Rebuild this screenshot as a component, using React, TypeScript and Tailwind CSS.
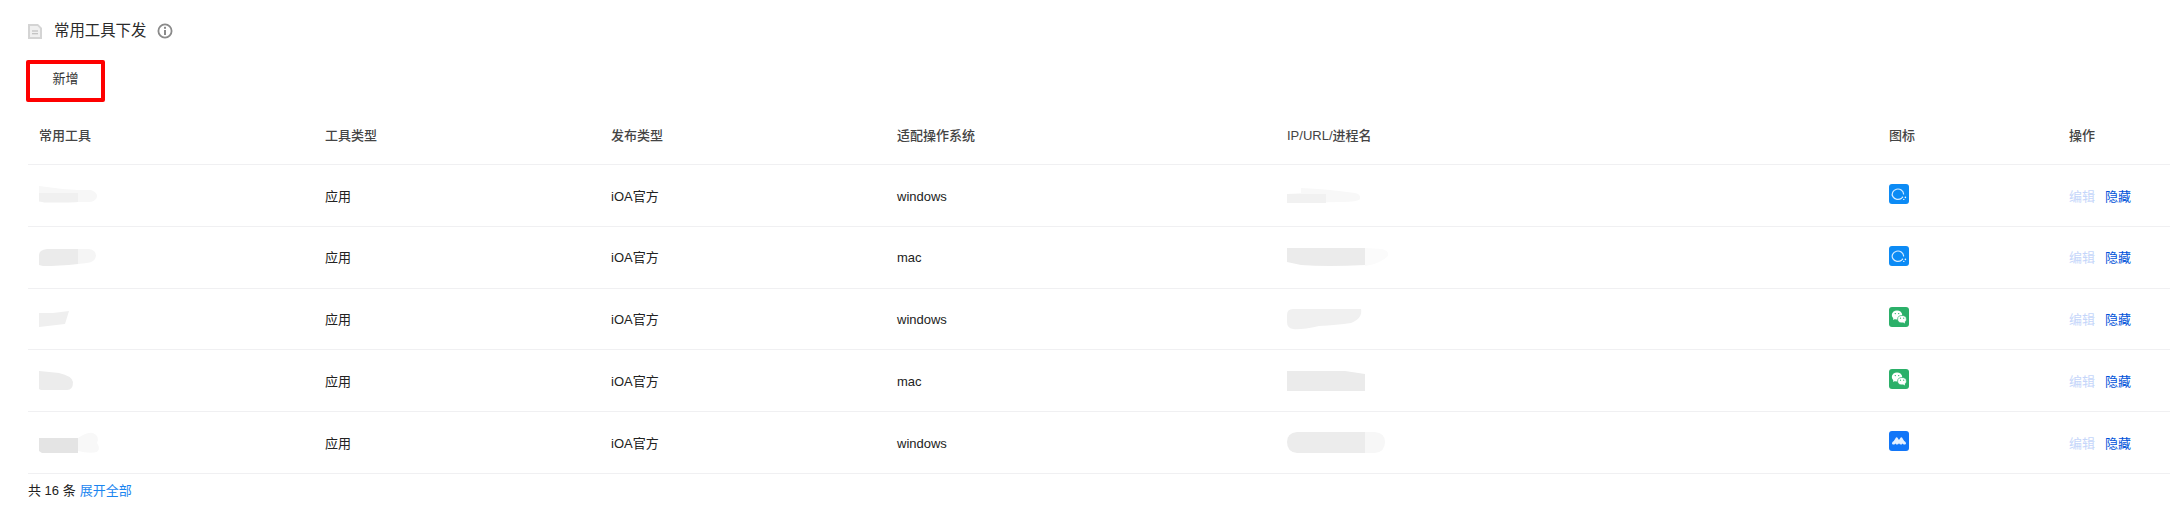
const FONT = "font-['Liberation_Sans','Noto_Sans_CJK_SC',sans-serif]";

type Row = {
  type: string;
  os: string;
  icon: "qq" | "wechat" | "meeting";
  name: React.ReactNode;
  target: React.ReactNode;
};

function Smudge({ w, h, children }: { w: number; h: number; children: React.ReactNode }) {
  return (
    <svg width={w} height={h} viewBox={`0 0 ${w} ${h}`} className="block">
      {children}
    </svg>
  );
}

function ChatIcon() {
  return (
    <svg width="20" height="20" viewBox="0 0 20 20" className="block">
      <rect width="20" height="20" rx="3" fill="#0c8bf5" />
      <path
        d="M12.6 14.2A5.7 5.2 0 1 1 14.6 10"
        fill="none"
        stroke="#d5ebff"
        strokeWidth="1.2"
        strokeLinecap="round"
      />
      <circle cx="13.4" cy="13.2" r="0.8" fill="#eef7ff" />
      <circle cx="16.4" cy="13.4" r="0.8" fill="#eef7ff" />
      <circle cx="14.8" cy="15.4" r="0.7" fill="#eef7ff" />
    </svg>
  );
}

function WechatIcon() {
  return (
    <svg width="20" height="20" viewBox="0 0 20 20" className="block">
      <rect width="20" height="20" rx="3" fill="#2bb069" />
      <ellipse cx="8" cy="8" rx="5.2" ry="4.6" fill="#fff" />
      <path d="M4.6 10.5l-.6 2.6 2.6-1.4z" fill="#fff" />
      <ellipse cx="13" cy="12.2" rx="4.4" ry="3.7" fill="#fff" stroke="#2bb069" strokeWidth="0.7" />
      <path d="M15.5 14.5l.6 2-2-1z" fill="#fff" />
      <circle cx="6.3" cy="6.6" r="0.7" fill="#2bb069" />
      <circle cx="9.7" cy="6.6" r="0.7" fill="#2bb069" />
      <circle cx="11.5" cy="11.2" r="0.6" fill="#2bb069" />
      <circle cx="14.7" cy="11.2" r="0.6" fill="#2bb069" />
    </svg>
  );
}

function MeetingIcon() {
  return (
    <svg width="20" height="20" viewBox="0 0 20 20" className="block">
      <rect width="20" height="20" rx="3" fill="#1276f8" />
      <path
        d="M3 12.5 Q3 10.5 4.8 10 L7 6.5 Q7.6 5.8 8.3 6.5 L10 9 L11.7 6.5 Q12.4 5.8 13 6.5 L15.2 10 Q17 10.5 17 12.5 Q17 13.6 15.8 13.6 Q14.4 13.6 13.6 12.4 Q12.8 13.6 11.8 13.6 Q10.7 13.6 10 12.3 Q9.3 13.6 8.2 13.6 Q7.2 13.6 6.4 12.4 Q5.6 13.6 4.2 13.6 Q3 13.6 3 12.5Z"
        fill="#e6f1ff"
      />
    </svg>
  );
}

const ICONS = { qq: <ChatIcon />, wechat: <WechatIcon />, meeting: <MeetingIcon /> };

const rows: Row[] = [
  {
    type: "iOA官方",
    os: "windows",
    icon: "qq",
    name: (
      <Smudge w={60} h={18}>
        <path d="M0 0 Q20 3 39 4 L52 4 Q59 7 58 11 Q56 16 50 16 L39 16 L0 16Z" fill="#f7f7f7" />
        <path d="M0 7 L39 7 L39 16 Q38 16.5 5 16.5 L0 15Z" fill="#f0f0f0" />
      </Smudge>
    ),
    target: (
      <Smudge w={75} h={16}>
        <path d="M14 1 Q40 2 68 6 Q74 7 73 12 Q71 15 55 15 L0 16 L0 7 L14 6Z" fill="#f8f8f8" />
        <path d="M0 7 L39 7 L39 16 L0 16Z" fill="#f1f1f1" />
      </Smudge>
    ),
  },
  {
    type: "iOA官方",
    os: "mac",
    icon: "qq",
    name: (
      <Smudge w={58} h={20}>
        <path d="M39 2 L50 2 Q57 3 57 9 Q56 15 48 16 L39 17Z" fill="#f5f5f5" />
        <path d="M8 2 L39 2 L39 17 Q20 19 4 19 L0 18 L0 8 Q0 3 8 2Z" fill="#ebebeb" />
      </Smudge>
    ),
    target: (
      <Smudge w={104} h={20}>
        <path d="M78 1 L95 2 Q104 5 100 10 Q92 17 78 19Z" fill="#fbfbfb" />
        <path d="M0 1 L78 1 L78 18 Q40 20 14 18 L0 15Z" fill="#ebebeb" />
      </Smudge>
    ),
  },
  {
    type: "iOA官方",
    os: "windows",
    icon: "wechat",
    name: (
      <Smudge w={32} h={18}>
        <path d="M0 3 L14 3 L30 1 L26 14 L0 17Z" fill="#efefef" />
      </Smudge>
    ),
    target: (
      <Smudge w={76} h={22}>
        <path d="M6 1 L74 1 Q76 10 64 15 Q50 17 32 18 Q14 22 6 21 Q0 20 0 14 L0 7 Q0 1 6 1Z" fill="#f0f0f0" />
      </Smudge>
    ),
  },
  {
    type: "iOA官方",
    os: "mac",
    icon: "wechat",
    name: (
      <Smudge w={36} h={20}>
        <path d="M0 0 L20 2 Q33 5 34 11 Q34 19 28 19 L2 19 L0 18Z" fill="#ececec" />
      </Smudge>
    ),
    target: (
      <Smudge w={78} h={20}>
        <path d="M0 0 L58 0 L78 3 L78 20 L0 20Z" fill="#ebebeb" />
      </Smudge>
    ),
  },
  {
    type: "iOA官方",
    os: "windows",
    icon: "meeting",
    name: (
      <Smudge w={62} h={22}>
        <path d="M39 6 Q48 0 54 1 Q61 4 58 11 Q62 17 58 20 Q50 22 39 19Z" fill="#f8f8f8" />
        <path d="M0 6 L39 6 L39 21 L3 21 L0 19Z" fill="#e4e4e4" />
      </Smudge>
    ),
    target: (
      <Smudge w={98} h={21}>
        <path d="M78 0 L88 0 Q98 1 98 10 Q98 20 88 21 L78 21Z" fill="#f7f7f7" />
        <path d="M10 0 L78 0 L78 21 L10 21 Q0 20 0 10 Q0 1 10 0Z" fill="#ececec" />
      </Smudge>
    ),
  },
];

const GRID = "grid grid-cols-[286px_286px_286px_390px_602px_180px_112px]";

export default function App() {
  return (
    <div className={`${FONT} w-[2170px] h-[529px] bg-white pl-[28px] text-[13px] text-[#222]`}>
      <div className="flex h-[60px] items-center pt-[2px]">
        <svg width="14" height="15" viewBox="0 0 14 15" className="block">
          <path d="M0 0H10L14 4V15H0Z" fill="#d4d4d4" />
          <path d="M2 2H9.5L12 4.5V13H2Z" fill="#f0f0f0" />
          <path d="M4 7H10M4 9.7H10" stroke="#b5b5b5" strokeWidth="1.1" />
        </svg>
        <span className="ml-[12px] text-[15.4px] leading-[20px] text-[#2a2a2a]">常用工具下发</span>
        <svg width="16" height="16" viewBox="0 0 16 16" className="ml-[11px] block">
          <circle cx="8" cy="8" r="6.6" fill="none" stroke="#8a8a8a" strokeWidth="1.8" />
          <rect x="7" y="7" width="2" height="5" fill="#8a8a8a" />
          <rect x="7" y="3.8" width="2" height="2" fill="#8a8a8a" />
        </svg>
      </div>
      <button className="-ml-[2px] flex h-[42px] w-[79px] items-center justify-center rounded-[2px] border-[4px] border-[#fe0000] bg-white pb-[4px] text-[13px] text-[#333]">
        新增
      </button>
      <div className={`${GRID} mt-[4px] h-[59px] items-center border-b border-[#f0f0f2] text-[#444]`}>
        {["常用工具", "工具类型", "发布类型", "适配操作系统", "IP/URL/进程名", "图标", "操作"].map((title) => (
          <div key={title} className="px-[11px] pt-[2px] font-medium">
            {title}
          </div>
        ))}
      </div>
      {rows.map((row, i) => (
        <div key={i} className={`${GRID} h-[61.8px] items-center border-b border-[#f0f0f2]`}>
          <div className="px-[11px]">{row.name}</div>
          <div className="px-[11px] pt-[2px]">应用</div>
          <div className="px-[11px] pt-[2px]">{row.type}</div>
          <div className="px-[11px] pt-[2px]">{row.os}</div>
          <div className="px-[11px]">{row.target}</div>
          <div className="pl-[11px] pb-[3px]">{ICONS[row.icon]}</div>
          <div className="flex gap-[10px] px-[11px] pt-[2px]">
            <span className="text-[#c5d6fa]">编辑</span>
            <span className="text-[#0052d9]">隐藏</span>
          </div>
        </div>
      ))}
      <div className="flex h-[34px] items-center gap-[4px] text-[13px]">
        <span>共 16 条</span>
        <span className="text-[#1a85f0]">展开全部</span>
      </div>
    </div>
  );
}
